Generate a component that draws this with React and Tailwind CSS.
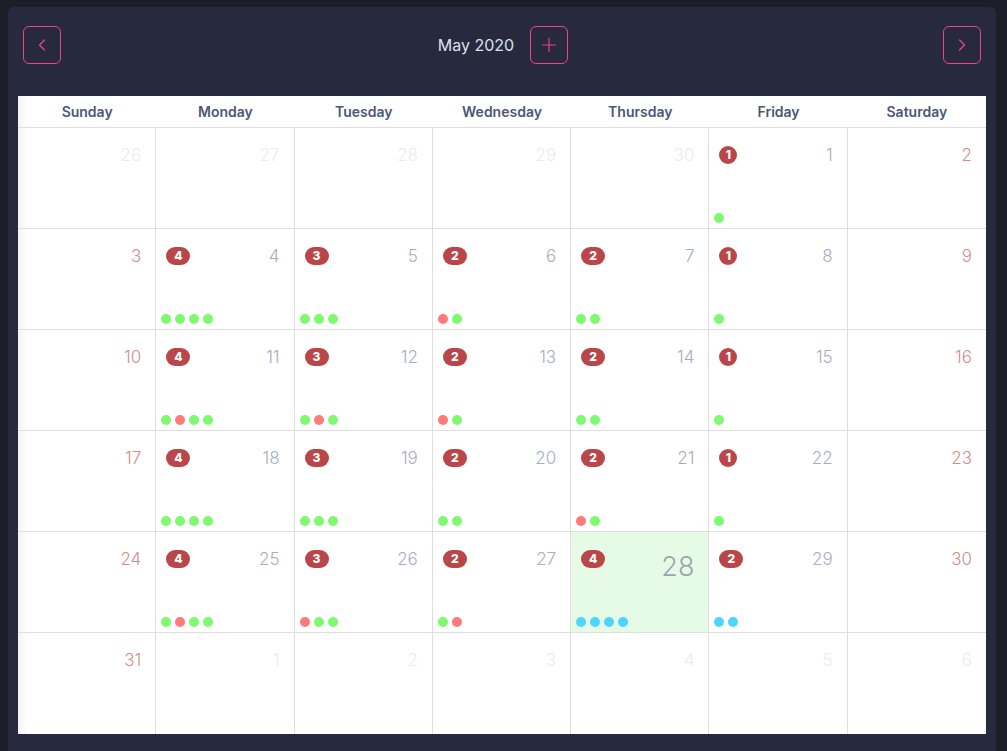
import { ChevronLeft, ChevronRight, Plus } from 'lucide-react'

const DAYS = ['Sunday', 'Monday', 'Tuesday', 'Wednesday', 'Thursday', 'Friday', 'Saturday']

// dot codes: g = green, r = red, b = blue
const EVENTS = {
  1: 'g',
  4: 'gggg', 5: 'ggg', 6: 'rg', 7: 'gg', 8: 'g',
  11: 'grgg', 12: 'grg', 13: 'rg', 14: 'gg', 15: 'g',
  18: 'gggg', 19: 'ggg', 20: 'gg', 21: 'rg', 22: 'g',
  25: 'grgg', 26: 'rgg', 27: 'gr', 28: 'bbbb', 29: 'bb',
}

const DOT = { g: 'bg-[#7dfa6e]', r: 'bg-[#ff7a78]', b: 'bg-[#4fd5fc]' }

const cells = [
  ...[26, 27, 28, 29, 30].map(d => ({ day: d, other: true })),
  ...Array.from({ length: 31 }, (_, i) => ({ day: i + 1 })),
  ...[1, 2, 3, 4, 5, 6].map(d => ({ day: d, other: true })),
]

function Badge({ n }) {
  return (
    <span
      className={`flex items-center justify-center h-[18px] rounded-full bg-[#b9474a] text-white text-[12px] font-extrabold leading-none ${
        n === 1 ? 'w-[18px]' : 'w-[24px]'
      }`}
    >
      {n}
    </span>
  )
}

function Cell({ cell, index }) {
  const col = index % 7
  const weekend = col === 0 || col === 6
  const today = !cell.other && cell.day === 28
  const dots = !cell.other ? EVENTS[cell.day] : null
  const lastCol = col === 6
  const lastRow = index >= 35

  let numColor = 'text-[#a5adbf]'
  if (cell.other) numColor = 'text-[#ebebee]'
  else if (weekend) numColor = 'text-[#d58b8b]'
  if (today) numColor = 'text-[#9ba6ab]'

  return (
    <div
      className={`h-[101px] flex flex-col ${lastCol ? '' : 'border-r'} ${lastRow ? 'h-[100px]' : 'border-b'} border-[#dedede] ${
        today ? 'bg-[#e6fbe6]' : ''
      }`}
    >
      <div className="flex items-start justify-between pl-[10px] pr-[14px] pt-[18px] leading-none">
        <div className="flex h-[18px]">{dots && <Badge n={dots.length} />}</div>
        <span
          className={`font-light leading-none ${numColor} ${
            today ? 'text-[27px] mt-[3px]' : 'text-[17px] mt-[1px]'
          }`}
        >
          {cell.day}
        </span>
      </div>
      {dots && (
        <div className="mt-auto flex gap-[4px] pl-[5px] pb-[5px]">
          {dots.split('').map((d, i) => (
            <span key={i} className={`w-[10px] h-[10px] rounded-full ${DOT[d]}`} />
          ))}
        </div>
      )}
    </div>
  )
}

function NavButton({ children }) {
  return (
    <button className="w-[38px] h-[38px] flex items-center justify-center rounded-[6px] border border-[#ee4580] text-[#ee4580]">
      {children}
    </button>
  )
}

export default function App() {
  return (
    <div
      className="min-h-[751px] bg-[#1e1e28] pt-[7px] pl-[8px] overflow-hidden"
      style={{ fontFamily: 'Inter, "Open Sans", sans-serif' }}
    >
      <div className="w-[988px] h-[760px] rounded-t-[6px] bg-[#272a3e] px-[10px]">
        {/* Header */}
        <div className="h-[89px] flex items-start justify-between px-[5px] pt-[19px]">
          <NavButton>
            <ChevronLeft size={20} strokeWidth={1.5} />
          </NavButton>
          <div className="flex items-center gap-[16px] ml-[2px]">
            <span className="text-[16px] text-[#dde0ea]">May 2020</span>
            <NavButton>
              <Plus size={22} strokeWidth={1.25} />
            </NavButton>
          </div>
          <NavButton>
            <ChevronRight size={20} strokeWidth={1.5} />
          </NavButton>
        </div>

        {/* Calendar */}
        <div className="w-[968px] bg-white shadow-[inset_14px_0_12px_-12px_rgba(0,0,0,0.08)]">
          <div className="grid grid-cols-7 h-[32px] border-b border-[#dedede]">
            {DAYS.map(d => (
              <div key={d} className="flex items-center justify-center text-[14px] font-semibold text-[#4b5876]">
                {d}
              </div>
            ))}
          </div>
          <div className="grid grid-cols-7">
            {cells.map((c, i) => (
              <Cell key={i} cell={c} index={i} />
            ))}
          </div>
        </div>
      </div>
    </div>
  )
}
